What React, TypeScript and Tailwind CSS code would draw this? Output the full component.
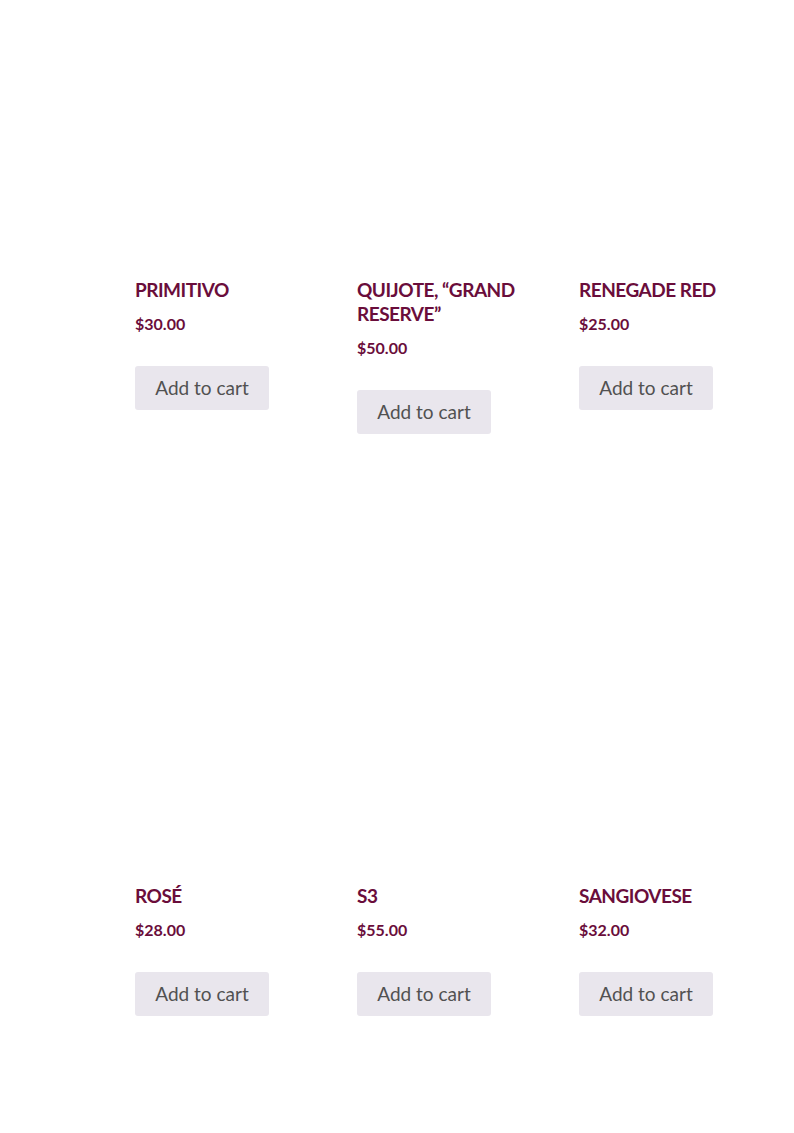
import React from 'react';

interface Product {
  name: string;
  price: string;
}

const products: Product[] = [
  { name: 'Primitivo', price: '$30.00' },
  { name: 'Quijote, “Grand Reserve”', price: '$50.00' },
  { name: 'Renegade Red', price: '$25.00' },
  { name: 'Rosé', price: '$28.00' },
  { name: 'S3', price: '$55.00' },
  { name: 'Sangiovese', price: '$32.00' },
];

function ProductCard({ product }: { product: Product }) {
  return (
    <li className="flex flex-col items-start">
      {/* product image area (blank in the shot) */}
      <div className="w-full h-[262px] mb-4 bg-white" />
      <h2 className="text-[19px] leading-[24px] font-bold uppercase text-[#6a0d3b] tracking-[-0.5px]">
        {product.name}
      </h2>
      <span className="mt-3 text-[16px] leading-[20px] font-bold text-[#6a0d3b]">
        {product.price}
      </span>
      <button className="mt-8 h-[44px] w-[134px] pb-[2px] rounded-[3px] bg-[#e9e6ed] text-[19px] text-[#515151] leading-none">
        Add to cart
      </button>
    </li>
  );
}

export default function App() {
  return (
    <div
      className="min-h-[1133px] bg-white"
      style={{ fontFamily: '"Source Sans Pro", Lato, "Liberation Sans", sans-serif' }}
    >
      <ul className="grid grid-cols-[180px_180px_180px] gap-x-[42px] gap-y-[172px] pl-[135px]">
        {products.map(p => (
          <ProductCard key={p.name} product={p} />
        ))}
      </ul>
    </div>
  );
}
